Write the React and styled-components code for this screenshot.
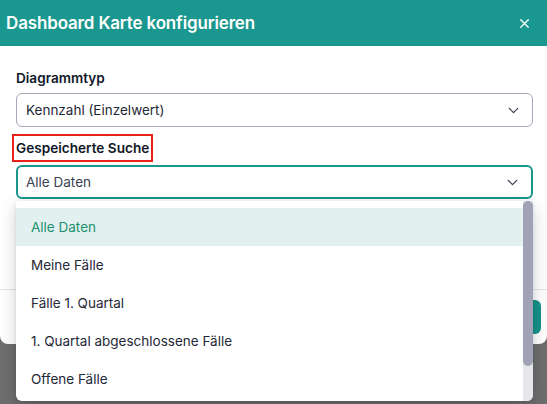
import styled, { createGlobalStyle } from "styled-components";
import { X, ChevronDown } from "lucide-react";

const GlobalStyle = createGlobalStyle`
  html, body {
    margin: 0;
    padding: 0;
    background: #6f6f6f;
    font-family: Inter, "Noto Sans", sans-serif;
    -webkit-font-smoothing: antialiased;
  }
  * { box-sizing: border-box; }
`;

const Backdrop = styled("div")`
  width: 547px;
  height: 404px;
  overflow: hidden;
  background-color: #6e6e6e;
`;

const Modal = styled("div")`
  position: relative;
  width: 547px;
  background-color: #ffffff;
  border-radius: 0 0 8px 8px;
`;

const Header = styled("div")`
  display: flex;
  justify-content: space-between;
  align-items: center;
  height: 46px;
  padding: 0 15px 0 6px;
  background-color: #1a978e;
  color: #ffffff;
`;

const Title = styled("h2")`
  margin: 0;
  font-size: 17px;
  font-weight: 600;
  letter-spacing: -0.15px;
`;

const Close = styled("button")`
  display: flex;
  padding: 0;
  border: none;
  background: none;
  color: #ffffff;
`;

const Body = styled("div")`
  display: flex;
  flex-direction: column;
  gap: 11px;
  padding: 22px 14px 90px 16px;
`;

const Field = styled("div")`
  position: relative;
  display: flex;
  flex-direction: column;
  align-items: flex-start;
  gap: ${({ $tight }) => ($tight ? "7px" : "5px")};
`;

const Label = styled("label")`
  display: inline-block;
  height: 20px;
  font-size: 13.6px;
  line-height: 20px;
  font-weight: 600;
  color: #111827;
  outline: ${({ $marked }) => ($marked ? "2px solid #e8231c" : "none")};
  outline-offset: 2px;
`;

const Select = styled("div")`
  display: flex;
  justify-content: space-between;
  align-items: center;
  width: 100%;
  height: 34px;
  padding: 0 10px 0 ${({ $open }) => ($open ? "8px" : "9px")};
  border: ${({ $open }) => ($open ? "2px solid #1a968e" : "1px solid #a3a9b6")};
  border-radius: 6px;
  font-size: 13.5px;
  color: ${({ $open }) => ($open ? "#3a4152" : "#1f2937")};
  background-color: #ffffff;
`;

const Menu = styled("div")`
  position: absolute;
  top: 63px;
  left: 0;
  right: 0;
  z-index: 10;
  display: flex;
  height: 200px;
  overflow: hidden;
  background-color: #ffffff;
  border-radius: 0 0 6px 6px;
  box-shadow: 0 6px 18px rgba(0, 0, 0, 0.18), 0 1px 4px rgba(0, 0, 0, 0.08);
`;

const Options = styled("ul")`
  flex: 1;
  margin: 0;
  padding: 7px 0 8px;
  list-style: none;
  overflow: hidden;
`;

const Option = styled("li")`
  display: flex;
  align-items: center;
  height: 38px;
  padding: 0 15px;
  font-size: 13.5px;
  color: ${({ $active }) => ($active ? "#23906f" : "#1f2937")};
  background-color: ${({ $active }) => ($active ? "#e2f0ef" : "transparent")};
`;

const ScrollTrack = styled("div")`
  width: 10px;
  flex-shrink: 0;
  background-color: #e5e7eb;
`;

const ScrollThumb = styled("div")`
  height: 165px;
  border-radius: 5px;
  background-color: #a1a2b5;
`;

const Footer = styled("div")`
  display: flex;
  justify-content: flex-end;
  gap: 8px;
  padding: 10px 6px 10px 16px;
  border-top: 1px solid #e4e6ea;
`;

const Button = styled("button")`
  height: 34px;
  padding: 0 16px;
  border-radius: 6px;
  font-family: inherit;
  font-size: 14px;
  border: ${({ $primary }) => ($primary ? "none" : "1px solid #d1d5db")};
  color: ${({ $primary }) => ($primary ? "#ffffff" : "#1f2937")};
  background-color: ${({ $primary }) => ($primary ? "#17938a" : "#ffffff")};
`;

const searches = [
  "Alle Daten",
  "Meine Fälle",
  "Fälle 1. Quartal",
  "1. Quartal abgeschlossene Fälle",
  "Offene Fälle",
];

const App = () => {
  return (
    <>
      <GlobalStyle />
      <Backdrop>
        <Modal>
          <Header>
            <Title>Dashboard Karte konfigurieren</Title>
            <Close>
              <X size={15} strokeWidth={2} />
            </Close>
          </Header>
          <Body>
            <Field>
              <Label>Diagrammtyp</Label>
              <Select>
                Kennzahl (Einzelwert)
                <ChevronDown size={17} strokeWidth={1.8} color="#374151" />
              </Select>
            </Field>
            <Field $tight>
              <Label $marked>Gespeicherte Suche</Label>
              <Select $open>
                Alle Daten
                <ChevronDown size={17} strokeWidth={1.8} color="#374151" />
              </Select>
              <Menu>
                <Options>
                  {searches.map((s, i) => (
                    <Option key={s} $active={i === 0}>
                      {s}
                    </Option>
                  ))}
                </Options>
                <ScrollTrack>
                  <ScrollThumb />
                </ScrollTrack>
              </Menu>
            </Field>
          </Body>
          <Footer>
            <Button>Abbrechen</Button>
            <Button $primary>Speichern</Button>
          </Footer>
        </Modal>
      </Backdrop>
    </>
  );
};

export default App;
